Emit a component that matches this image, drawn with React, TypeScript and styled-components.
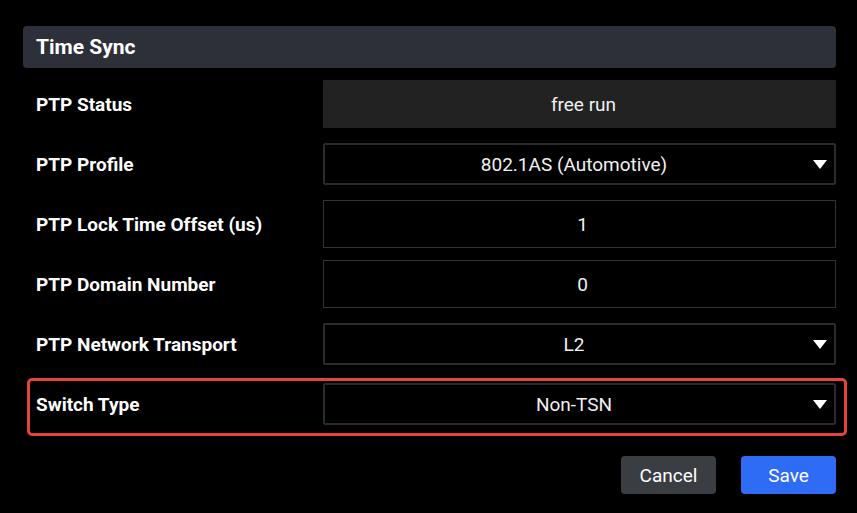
import React from "react";
import styled, { createGlobalStyle } from "styled-components";

const Global = createGlobalStyle`
  html, body { margin: 0; padding: 0; background: #000; }
  body { font-family: Roboto, "Noto Sans", "Liberation Sans", sans-serif; color: #fff; }
`;

const Page = styled.div`
  width: 857px;
  height: 513px;
  box-sizing: border-box;
  padding: 26px 21px 0 23px;
  display: flex;
  flex-direction: column;
`;

const Header = styled.div`
  height: 42px;
  background: #2d3039;
  border-radius: 4px;
  display: flex;
  align-items: center;
  padding-left: 13px;
  font-size: 21px;
  font-weight: 700;
  color: #fff;
`;

const Rows = styled.div`
  display: flex;
  flex-direction: column;
  gap: 12px;
  margin-top: 12px;
`;

const Row = styled.div`
  position: relative;
  height: 48px;
  display: grid;
  grid-template-columns: 300px 1fr;
  align-items: center;
`;

const Highlight = styled.div`
  position: absolute;
  top: -2px;
  bottom: -8px;
  left: 4px;
  right: -11px;
  border: 3px solid #e5443b;
  border-radius: 5px;
  pointer-events: none;
`;

const Label = styled.div`
  padding-left: 13px;
  font-size: 19px;
  font-weight: 700;
  color: #fff;
`;

const ValueBase = styled.div`
  box-sizing: border-box;
  display: flex;
  align-items: center;
  justify-content: center;
  font-size: 19px;
  color: #f0f0f0;
  position: relative;
`;

const Status = styled(ValueBase)`
  height: 48px;
  background: #222;
  padding-left: 8px;
`;

const Input = styled(ValueBase)`
  height: 48px;
  border: 1px solid #333;
  padding-left: 6px;
`;

const Select = styled(ValueBase)`
  height: 42px;
  border: 2px solid #2b2b2b;
  border-radius: 2px;
  padding-right: 11px;
`;

const Arrow = styled.svg`
  position: absolute;
  right: 7px;
  top: 50%;
  margin-top: -4px;
`;

const Actions = styled.div`
  display: flex;
  justify-content: flex-end;
  gap: 25px;
  margin-top: 28px;
`;

const Button = styled.button<{ $primary?: boolean }>`
  width: 95px;
  height: 38px;
  border: none;
  border-radius: 4px;
  font-family: inherit;
  font-size: 19px;
  color: #fff;
  background: ${(p) => (p.$primary ? "#2f6cf6" : "#3a3d42")};
`;

const Caret = () => (
  <Arrow width="14" height="9" viewBox="0 0 14 9">
    <path d="M0 0 H14 L7 9 Z" fill="#fff" />
  </Arrow>
);

export default function App() {
  return (
    <Page>
      <Global />
      <Header>Time Sync</Header>
      <Rows>
        <Row>
          <Label>PTP Status</Label>
          <Status>free run</Status>
        </Row>
        <Row>
          <Label>PTP Profile</Label>
          <Select>
            802.1AS (Automotive)
            <Caret />
          </Select>
        </Row>
        <Row>
          <Label>PTP Lock Time Offset (us)</Label>
          <Input>1</Input>
        </Row>
        <Row>
          <Label>PTP Domain Number</Label>
          <Input>0</Input>
        </Row>
        <Row>
          <Label>PTP Network Transport</Label>
          <Select>
            L2
            <Caret />
          </Select>
        </Row>
        <Row>
          <Highlight />
          <Label>Switch Type</Label>
          <Select>
            Non-TSN
            <Caret />
          </Select>
        </Row>
      </Rows>
      <Actions>
        <Button>Cancel</Button>
        <Button $primary>Save</Button>
      </Actions>
    </Page>
  );
}
